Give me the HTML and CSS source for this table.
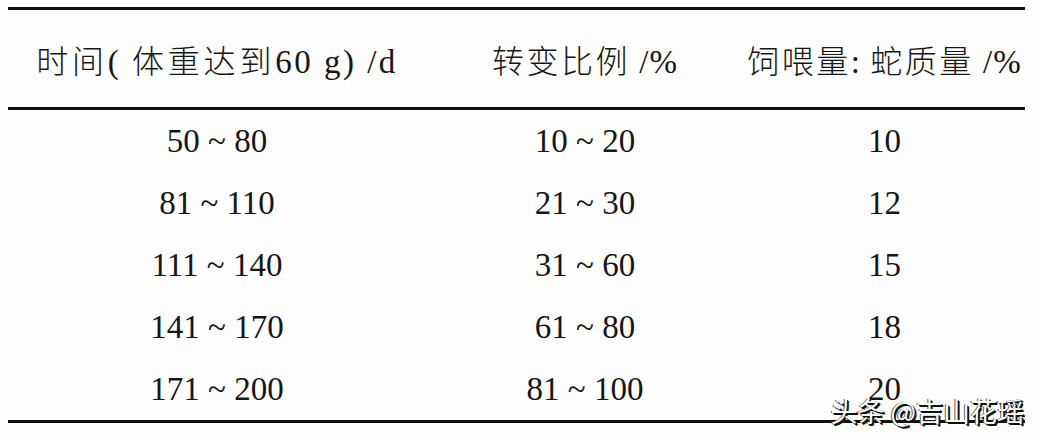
FILE: index.html
```html
<!DOCTYPE html>
<html lang="zh-CN">
<head>
<meta charset="utf-8">
<title>蛇饲喂量表</title>
<link rel="stylesheet" href="styles.css">
</head>
<body>
<div class="page">
  <table class="data">
    <colgroup>
      <col class="c1">
      <col class="c2">
      <col class="c3">
    </colgroup>
    <thead>
      <tr>
        <th class="wide">时间<span class="lat">( </span>体重达到<span class="lat">60 g) /d</span></th>
        <th>转变比例<span class="lat"> /%</span></th>
        <th>饲喂量<span class="lat">: </span>蛇质量<span class="lat"> /%</span></th>
      </tr>
    </thead>
    <tbody>
      <tr><td>50 ~ 80</td><td>10 ~ 20</td><td>10</td></tr>
      <tr><td>81 ~ 110</td><td>21 ~ 30</td><td>12</td></tr>
      <tr><td>111 ~ 140</td><td>31 ~ 60</td><td>15</td></tr>
      <tr><td>141 ~ 170</td><td>61 ~ 80</td><td>18</td></tr>
      <tr><td>171 ~ 200</td><td>81 ~ 100</td><td>20</td></tr>
    </tbody>
  </table>
  <div class="watermark">头条 @吉山花瑶</div>
</div>
</body>
</html>
```
FILE: styles.css
```css
html, body {
  margin: 0;
  padding: 0;
  background: #fdfdfd;
}

.page {
  position: relative;
  width: 1038px;
  height: 438px;
  padding: 7px 0 0 8px;
  box-sizing: border-box;
  overflow: hidden;
}

.data {
  border-collapse: collapse;
  table-layout: fixed;
  width: 1017px;
  color: #161616;
  font-family: "Liberation Serif", "Noto Sans CJK SC", serif;
  border-top: 3px solid #111;
  border-bottom: 3px solid #111;
}

.c1 { width: 418px; }
.c2 { width: 318px; }
.c3 { width: 281px; }

.data th {
  height: 97px;
  padding: 0;
  font-family: "Noto Sans CJK SC", sans-serif;
  font-size: 32px;
  font-weight: 300;
  letter-spacing: 2.5px;
  text-align: center;
  vertical-align: middle;
  border-bottom: 3px solid #111;
}

.data th .lat {
  font-family: "Liberation Serif", serif;
  font-weight: 400;
  font-size: 33px;
  letter-spacing: 1px;
}

.data th.wide {
  letter-spacing: 3.8px;
}

.data th.wide .lat {
  letter-spacing: 2.5px;
}

.data td {
  height: 62px;
  padding: 0;
  font-size: 33px;
  text-align: center;
  vertical-align: middle;
  line-height: 1;
}

.watermark {
  position: absolute;
  right: 14px;
  bottom: 14px;
  font-family: "Noto Sans CJK SC", "Noto Sans", sans-serif;
  font-size: 27px;
  line-height: 1;
  color: #fff;
  text-shadow: 2px 2px 0 #111, 1px 1px 0 #111, -1px 0 0 #555;
}
```
